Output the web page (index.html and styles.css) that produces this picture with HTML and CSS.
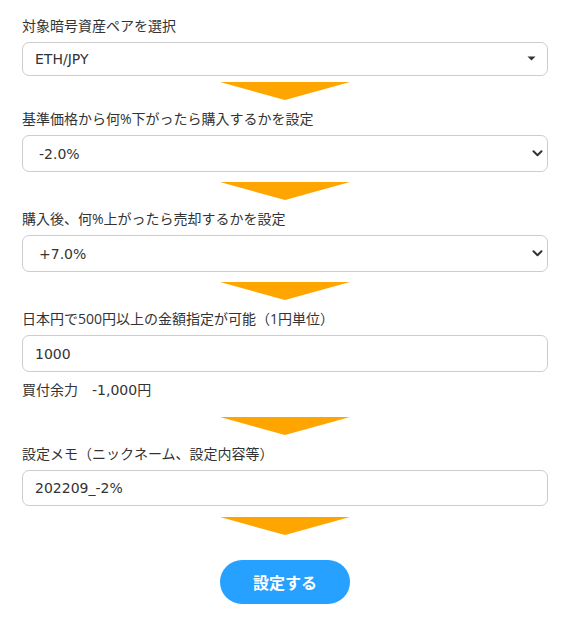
FILE: index.html
```html
<!DOCTYPE html>
<html lang="ja">
<head>
<meta charset="utf-8">
<title>設定</title>
<link rel="stylesheet" href="styles.css">
</head>
<body>
<div class="page">
  <div class="field field-first">
    <label class="label">対象暗号資産ペアを選択</label>
    <div class="select-wrap">
      <select class="control control-small"><option>ETH/JPY</option></select>
      <svg class="caret" width="9" height="5" viewBox="0 0 9 5"><path d="M0.5 0.5 L8.5 0.5 L4.5 4.5 Z" fill="#333"/></svg>
    </div>
  </div>
  <div class="arrow arrow-first"></div>

  <div class="field">
    <label class="label">基準価格から何%下がったら購入するかを設定</label>
    <div class="select-wrap">
      <select class="control control-native"><option>-2.0%</option></select>
      <svg class="chevron" width="11" height="7" viewBox="0 0 11 7"><path d="M1.5 1.3 L5.5 5.2 L9.5 1.3" fill="none" stroke="#333" stroke-width="2" stroke-linecap="round" stroke-linejoin="round"/></svg>
    </div>
  </div>
  <div class="arrow"></div>

  <div class="field">
    <label class="label">購入後、何%上がったら売却するかを設定</label>
    <div class="select-wrap">
      <select class="control control-native"><option>+7.0%</option></select>
      <svg class="chevron" width="11" height="7" viewBox="0 0 11 7"><path d="M1.5 1.3 L5.5 5.2 L9.5 1.3" fill="none" stroke="#333" stroke-width="2" stroke-linecap="round" stroke-linejoin="round"/></svg>
    </div>
  </div>
  <div class="arrow"></div>

  <div class="field">
    <label class="label">日本円で500円以上の金額指定が可能（1円単位）</label>
    <input class="control control-input" type="text" value="1000">
    <p class="balance">買付余力　-1,000円</p>
  </div>
  <div class="arrow arrow-after-balance"></div>

  <div class="field">
    <label class="label">設定メモ（ニックネーム、設定内容等）</label>
    <input class="control control-memo" type="text" value="202209_-2%">
  </div>
  <div class="arrow arrow-last"></div>

  <div class="actions">
    <button class="submit" type="button">設定する</button>
  </div>
</div>
</body>
</html>
```

FILE: styles.css
```css
* {
  box-sizing: border-box;
}

html, body {
  margin: 0;
  padding: 0;
  background: #fff;
}

body {
  font-family: "Open Sans", "Noto Sans CJK JP", sans-serif;
  color: #333;
  font-size: 14px;
}

.page {
  padding: 16px 18px 0 22px;
}

.field {
  display: flex;
  flex-direction: column;
  margin-top: 9px;
}

.field-first {
  margin-top: 0;
}

.label {
  display: block;
  font-size: 14px;
  line-height: 20px;
  height: 20px;
  margin-bottom: 6px;
  color: #333;
  white-space: nowrap;
}

.select-wrap {
  position: relative;
}

.control {
  display: block;
  width: 100%;
  margin: 0;
  border: 1px solid #cccccc;
  border-radius: 7px;
  background: #fff;
  color: #333;
  font-family: "DejaVu Sans", "Noto Sans CJK JP", sans-serif;
  font-size: 14px;
  -webkit-appearance: none;
  appearance: none;
  outline: none;
}

.control-small {
  height: 34px;
  padding: 0 12px;
}

.control-native {
  height: 37px;
  padding: 0 16px;
}

.control-input {
  height: 37px;
  padding: 0 12px;
}

.control-memo {
  height: 36px;
  padding: 0 12px;
}

.caret {
  position: absolute;
  right: 12px;
  top: 14px;
  pointer-events: none;
}

.chevron {
  position: absolute;
  right: 5px;
  top: 15px;
  pointer-events: none;
}

.balance {
  margin: 8px 0 0;
  font-family: "DejaVu Sans", "Noto Sans CJK JP", sans-serif;
  font-size: 14px;
  line-height: 20px;
  color: #333;
}

.arrow {
  width: 130px;
  height: 18px;
  margin: 10px auto 0;
  background: #ffa500;
  clip-path: polygon(0 0, 100% 0, 50% 100%);
}

.arrow-first {
  margin-top: 6px;
}

.arrow-after-balance {
  margin-top: 17px;
}

.arrow-last {
  margin-top: 11px;
}

.actions {
  display: flex;
  justify-content: center;
  margin-top: 25px;
}

.submit {
  width: 130px;
  height: 44px;
  border: none;
  border-radius: 22px;
  background: #27a1ff;
  color: #fff;
  font-family: "Noto Sans CJK JP", sans-serif;
  font-weight: 700;
  font-size: 16px;
  padding: 0;
  cursor: pointer;
}
```
